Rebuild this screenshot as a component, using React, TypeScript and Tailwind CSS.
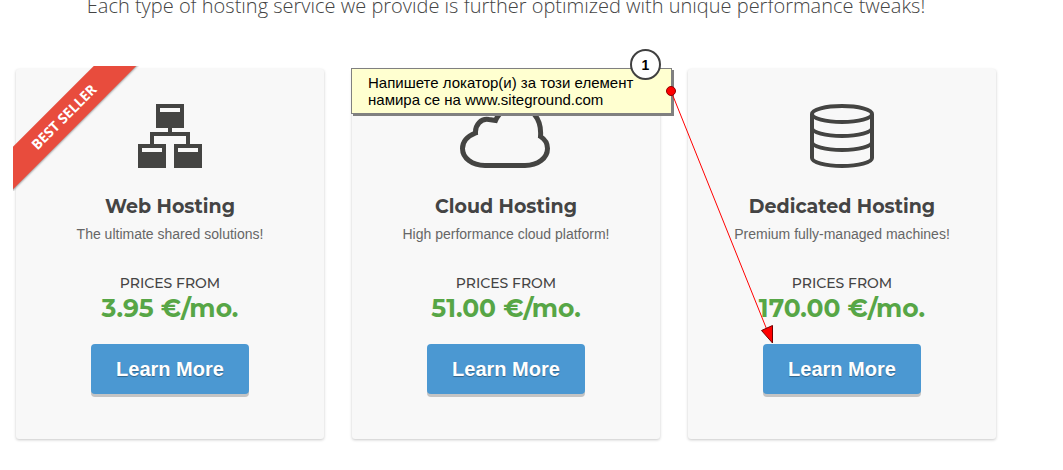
import type { ReactNode } from "react";

function NetworkIcon() {
  return (
    <svg viewBox="0 0 64 64" className="h-16 w-16" fill="#444442" aria-hidden="true">
      <path fillRule="evenodd" d="M18 0h28v24H18zM22 4v4h20V4z" />
      <path d="M30 24h4v4h18v12h-4v-8H16v8h-4V28h18z" />
      <path fillRule="evenodd" d="M0 40h28v24H0zM4 44v4h20v-4zM36 40h28v24H36zM40 44v4h20v-4z" />
    </svg>
  );
}

function CloudIcon() {
  return (
    <svg viewBox="0 0 92 64" className="h-16 w-[92px]" fill="none" stroke="#444442" strokeWidth="5" aria-hidden="true">
      <path d="M25 61.5C12 61.5 2.5 54 2.5 44.500C2.500 37.500 8 32 15.500 29C15 21 21 14 29 15.500L35.500 16.500C39 8 47 2.500 57 2.500C71 2.500 82 14 80.500 32.500C84.500 35 87.500 39 87.500 44.500C87.500 54 78 61.5 65 61.5Z" />
    </svg>
  );
}

function DatabaseIcon() {
  return (
    <svg viewBox="0 0 64 64" className="h-16 w-16" fill="none" stroke="#444442" strokeWidth="4" aria-hidden="true">
      <ellipse cx="32" cy="10" rx="30" ry="8" />
      <path d="M2 10v44c0 4.400 13.400 8 30 8s30-3.600 30-8V10M2 24c0 4.400 13.400 8 30 8s30-3.600 30-8M2 38c0 4.400 13.400 8 30 8s30-3.600 30-8" />
    </svg>
  );
}

function Ribbon() {
  return (
    <div className="absolute -top-[3px] -left-[3px] h-[125px] w-[126px] overflow-hidden">
      <div className="absolute top-9 -left-[49px] h-[30px] w-[200px] -rotate-45 bg-[#e84c3d] text-center font-['Open_Sans',sans-serif] text-sm leading-[30px] font-bold text-white shadow-[0_1px_2px_rgba(0,0,0,0.35)]">
        BEST SELLER
      </div>
    </div>
  );
}

function Annotation() {
  return (
    <>
      <div className="absolute -top-px -left-px z-10 w-[321px] border border-[#808080] bg-[#ffffd0] px-4 py-[5px] text-left text-[15px] leading-[17px] text-black shadow-[2px_2px_0_#808080]">
        <p>Напишете локатор(и) за този елемент</p>
        <p>намира се на www.siteground.com</p>
        <span className="absolute -top-5 right-[10px] flex h-[31px] w-[31px] items-center justify-center rounded-full border-2 border-[#404040] bg-white text-sm font-bold">
          1
        </span>
      </div>
      <svg
        viewBox="0 0 112 262"
        className="pointer-events-none absolute top-4 left-[313px] z-20 h-[262px] w-[112px]"
        aria-hidden="true"
      >
        <path d="M6 6L102 245" stroke="#ff0000" />
        <circle cx="6" cy="6" r="4.500" fill="#ff0000" stroke="#900000" />
        <path d="M96.500 245.500L107.500 240.500V258Z" fill="#ff0000" stroke="#700000" />
      </svg>
    </>
  );
}

interface PlanProps {
  title: string;
  tagline: string;
  price: string;
  icon: ReactNode;
  children?: ReactNode;
}

function PlanCard({ title, tagline, price, icon, children }: PlanProps) {
  return (
    <article className="relative flex flex-col items-center rounded-[3px] bg-[#f8f8f8] pt-[35px] pb-[45px] text-center shadow-[0_1px_3px_rgba(0,0,0,0.22)]">
      {icon}
      <h2 className="mt-[25px] font-['Montserrat','Inter',sans-serif] text-[19px] leading-7 font-bold text-[#444444]">{title}</h2>
      <p className="mt-[3px] text-sm leading-5 text-[#666666]">{tagline}</p>
      <p className="mt-[29px] font-['Montserrat','Inter',sans-serif] text-sm leading-5 font-medium text-[#444444]">PRICES FROM</p>
      <p className="font-['Montserrat','Inter',sans-serif] text-[25px] leading-[30px] font-bold text-[#57a646]">{price}</p>
      <a
        href="#"
        className="mt-[21px] rounded-[4px] bg-[#4b98d2] px-[25px] text-xl leading-[50px] font-bold text-white shadow-[0_3px_0_#c4c4c4] [text-shadow:0_1px_1px_rgba(0,0,0,0.35)]"
      >
        Learn More
      </a>
      {children}
    </article>
  );
}

export default function App() {
  return (
    <main className="flow-root bg-white px-4 pb-7 font-['Liberation_Sans',Arial,sans-serif]">
      <div className="max-w-[980px]">
        <p className="-mt-2 text-center font-['Open_Sans',sans-serif] text-xl leading-7 font-light text-[#444444]">
          Each type of hosting service we provide is further optimized with unique performance tweaks!
        </p>
        <div className="mt-[49px] grid grid-cols-3 gap-7">
          <PlanCard title="Web Hosting" tagline="The ultimate shared solutions!" price="3.95 €/mo." icon={<NetworkIcon />}>
            <Ribbon />
          </PlanCard>
          <PlanCard title="Cloud Hosting" tagline="High performance cloud platform!" price="51.00 €/mo." icon={<CloudIcon />}>
            <Annotation />
          </PlanCard>
          <PlanCard title="Dedicated Hosting" tagline="Premium fully-managed machines!" price="170.00 €/mo." icon={<DatabaseIcon />} />
        </div>
      </div>
    </main>
  );
}
